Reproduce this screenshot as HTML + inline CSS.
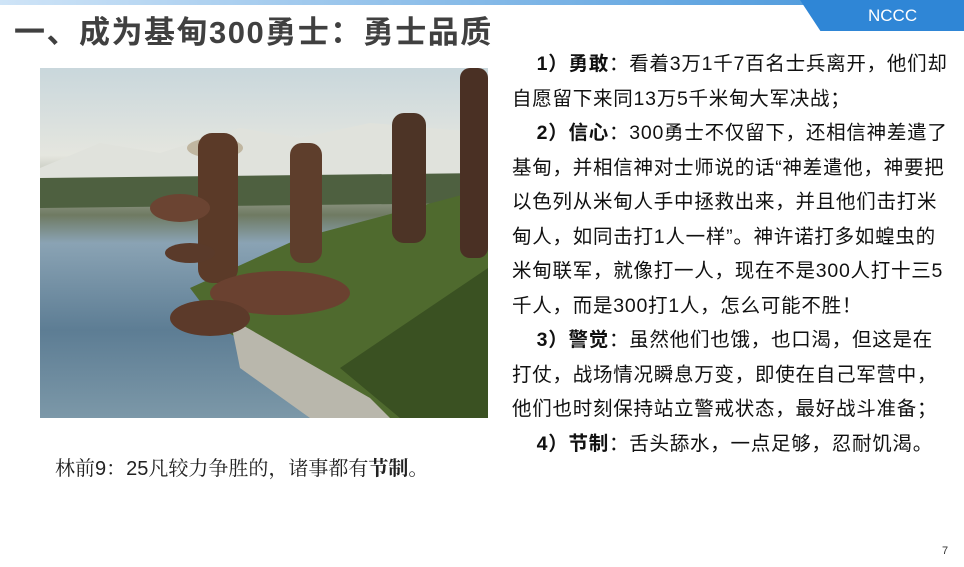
<!DOCTYPE html>
<html><head><meta charset="utf-8"><style>
body{margin:0;width:964px;height:567px;background:#fff;position:relative;overflow:hidden;font-family:"Liberation Sans","Noto Sans CJK SC",sans-serif}
.top{position:absolute;left:0;top:0;width:964px;height:5px;background:linear-gradient(90deg,#cfe4f7,#3b8fd8)}
.tab{position:absolute;left:800px;top:0;width:170px;height:31px;background:#2f86d6;clip-path:polygon(0 0,100% 0,100% 100%,12% 100%)}
.tab span{position:absolute;left:68px;top:6px;color:#fff;font-size:17px}
h1{position:absolute;left:14px;top:7px;margin:0;font-size:31px;color:#404040;font-weight:bold;letter-spacing:1.5px}
.img{position:absolute;left:40px;top:68px;width:448px;height:350px;overflow:hidden;background:linear-gradient(180deg,#c9d7dc 0%,#e5e6df 25%,#b8bdb0 32%,#6f7a62 42%,#8aa3b4 50%,#5d7d94 75%,#7c98a8 100%)}
.txt{position:absolute;left:512px;top:47px;font-size:19.5px;line-height:34.5px;color:#111;white-space:nowrap;letter-spacing:0.75px}
.txt p{margin:0}
.cap{position:absolute;left:55px;top:452px;font-size:20px;color:#222;font-family:"Liberation Sans","Noto Serif CJK SC",serif}
.pg{position:absolute;left:942px;top:545px;font-size:11px;color:#333}
</style></head><body>
<div class="top"></div>
<div class="tab"><span>NCCC</span></div>
<h1>一、成为基甸300勇士：勇士品质</h1>
<div class="img">
<svg width="448" height="350" viewBox="0 0 448 350">
<polygon points="0,100 60,75 120,85 200,60 260,70 330,55 448,65 448,120 0,125" fill="#e0e2dc"/>
<polygon points="0,110 448,105 448,135 0,140" fill="#4e6040"/>
<polygon points="448,120 448,350 330,350 250,300 180,260 150,220 260,170" fill="#4f6a2e"/>
<polygon points="448,200 448,350 360,350 300,300" fill="#3a5122"/>
<polygon points="190,250 330,330 350,350 270,350 200,300" fill="#b9b7ac"/>
<ellipse cx="175" cy="80" rx="28" ry="10" fill="#c0b6a0"/>
<rect x="158" y="65" width="40" height="150" rx="14" fill="#5b3a28"/>
<rect x="250" y="75" width="32" height="120" rx="12" fill="#5e3e2c"/>
<rect x="352" y="45" width="34" height="130" rx="12" fill="#4d3426"/>
<rect x="420" y="0" width="28" height="190" rx="10" fill="#4a3024"/>
<ellipse cx="240" cy="225" rx="70" ry="22" fill="#6a4130"/>
<ellipse cx="170" cy="250" rx="40" ry="18" fill="#5c3a2a"/>
<ellipse cx="140" cy="140" rx="30" ry="14" fill="#6b4432"/>
<ellipse cx="150" cy="185" rx="25" ry="10" fill="#5a3a2a"/>
</svg>
</div>
<div class="txt">
<p>&nbsp;&nbsp;&nbsp;&nbsp;<b>1）勇敢</b>：看着3万1千7百名士兵离开，他们却<br>自愿留下来同13万5千米甸大军决战；</p>
<p>&nbsp;&nbsp;&nbsp;&nbsp;<b>2）信心</b>：300勇士不仅留下，还相信神差遣了<br>基甸，并相信神对士师说的话“神差遣他，神要把<br>以色列从米甸人手中拯救出来，并且他们击打米<br>甸人，如同击打1人一样”。神许诺打多如蝗虫的<br>米甸联军，就像打一人，现在不是300人打十三5<br>千人，而是300打1人，怎么可能不胜！</p>
<p>&nbsp;&nbsp;&nbsp;&nbsp;<b>3）警觉</b>：虽然他们也饿，也口渴，但这是在<br>打仗，战场情况瞬息万变，即使在自己军营中，<br>他们也时刻保持站立警戒状态，最好战斗准备；</p>
<p>&nbsp;&nbsp;&nbsp;&nbsp;<b>4）节制</b>：舌头舔水，一点足够，忍耐饥渴。</p>
</div>
<div class="cap">林前9：25凡较力争胜的，诸事都有<b>节制</b>。</div>
<div class="pg">7</div>
</body></html>
